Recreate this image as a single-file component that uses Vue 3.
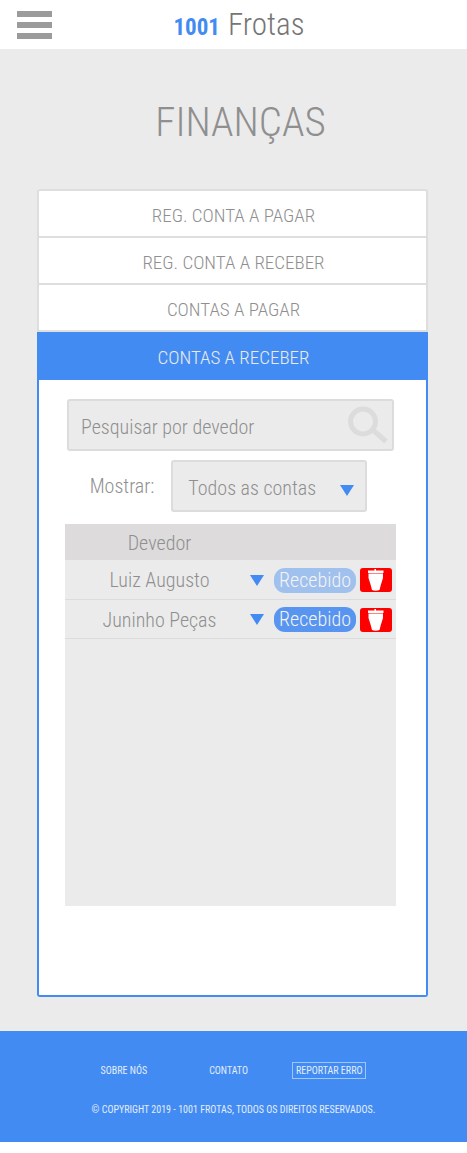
<script setup>
import { ref } from 'vue'

const tabs = ['REG. CONTA A PAGAR', 'REG. CONTA A RECEBER', 'CONTAS A PAGAR', 'CONTAS A RECEBER']
const active = ref('CONTAS A RECEBER')
const search = ref('')
const filter = ref('Todos as contas')
const debtors = ref([
  { name: 'Luiz Augusto', received: true },
  { name: 'Juninho Peças', received: false },
])

function remove(debtor) {
  debtors.value = debtors.value.filter((d) => d !== debtor)
}
</script>

<template>
  <div class="page">
    <header class="topbar">
      <button class="menu" type="button" aria-label="Menu">
        <span></span><span></span><span></span>
      </button>
      <a class="logo" href="#"><b>1001</b><span>Frotas</span></a>
    </header>

    <main>
      <h1>FINANÇAS</h1>

      <nav class="tabs">
        <button
          v-for="tab in tabs"
          :key="tab"
          type="button"
          :class="{ active: tab === active }"
          @click="active = tab"
        >{{ tab }}</button>
      </nav>

      <section class="panel">
        <div class="search">
          <input v-model="search" type="text" placeholder="Pesquisar por devedor" aria-label="Pesquisar por devedor" />
          <button type="button" aria-label="Pesquisar">
            <svg width="40" height="38" viewBox="0 0 40 38">
              <circle cx="15" cy="15.5" r="12.5" fill="none" stroke="#dcdcdc" stroke-width="5" />
              <path d="M25.5 24.5L38 35.5" stroke="#dcdcdc" stroke-width="5" />
            </svg>
          </button>
        </div>

        <div class="filter">
          <label for="filter">Mostrar:</label>
          <div class="select">
            <select id="filter" v-model="filter">
              <option>Todos as contas</option>
            </select>
            <svg width="14" height="11" viewBox="0 0 14 11"><path d="M0 0H14L7 11Z" fill="#428bf2" /></svg>
          </div>
        </div>

        <div class="list">
          <table>
            <colgroup>
              <col />
              <col class="col-toggle" />
              <col class="col-status" />
              <col class="col-delete" />
            </colgroup>
            <thead>
              <tr>
                <th scope="col">Devedor</th>
                <td colspan="3"></td>
              </tr>
            </thead>
            <tbody>
              <tr v-for="debtor in debtors" :key="debtor.name">
                <td>{{ debtor.name }}</td>
                <td class="toggle">
                  <button type="button" :aria-label="'Detalhes de ' + debtor.name">
                    <svg width="14" height="11" viewBox="0 0 14 11"><path d="M0 0H14L7 11Z" fill="#428bf2" /></svg>
                  </button>
                </td>
                <td class="status">
                  <button type="button" :class="{ done: debtor.received }" @click="debtor.received = true">Recebido</button>
                </td>
                <td class="delete">
                  <button type="button" :aria-label="'Excluir ' + debtor.name" @click="remove(debtor)">
                    <svg width="32" height="24" viewBox="0 0 32 24">
                      <rect width="32" height="24" rx="3" fill="#f00" />
                      <path d="M8 2.5H14.5V1H16V2.5H23.5V5H8Z" fill="#fff" />
                      <path d="M8.5 5.4H23V10L20.8 17L19.5 22Q15.5 23.5 12 22L10.700 17L8.5 10Z" fill="#fff" />
                    </svg>
                  </button>
                </td>
              </tr>
            </tbody>
          </table>
        </div>
      </section>
    </main>

    <footer>
      <nav>
        <a href="#">SOBRE NÓS</a>
        <a href="#">CONTATO</a>
        <a class="report" href="#">REPORTAR ERRO</a>
      </nav>
      <p>© COPYRIGHT 2019 - 1001 FROTAS, TODOS OS DIREITOS RESERVADOS.</p>
    </footer>
  </div>
</template>

<style>
body {
  margin: 0;
  background: #fff;
}
</style>

<style scoped>
.page {
  font-family: "Agency FB", "Roboto Condensed", "Roboto", "Liberation Sans", sans-serif;
  font-size: 20px;
  font-weight: 300;
  color: #8f8f8f;
}
.page * {
  box-sizing: border-box;
}
button,
input,
select {
  margin: 0;
  padding: 0;
  border: 0;
  background: none;
  font: inherit;
  color: inherit;
  cursor: pointer;
}
svg {
  display: block;
}
a {
  color: inherit;
  text-decoration: none;
}

.topbar {
  display: grid;
  grid-template-columns: 35px 1fr 24px;
  align-items: center;
  height: 49px;
  padding: 0 17px;
  background: #fff;
}
.menu {
  display: grid;
  gap: 5px;
  padding-bottom: 2px;
}
.menu span {
  height: 6px;
  background: #9b9b9b;
}
.logo {
  display: flex;
  justify-content: center;
  align-items: baseline;
  gap: 8px;
  font-size: 31px;
  line-height: 49px;
  color: #757575;
}
.logo b {
  font-size: 23px;
  font-weight: 700;
  color: #428bf2;
}

main {
  padding: 45px 39px 34px 37px;
  background: #ebebeb;
}
h1 {
  margin: 0 0 39px;
  padding-left: 16px;
  font-size: 41px;
  font-weight: 300;
  line-height: 56px;
  text-align: center;
}

.tabs {
  display: flex;
  flex-direction: column;
  border: 2px solid #dedede;
  border-bottom: 0;
  border-radius: 3px 3px 0 0;
  background: #fff;
}
.tabs button {
  height: 47px;
  padding: 4px 0 0 2px;
  border-bottom: 2px solid #dedede;
  font-size: 19px;
}
.tabs button.active {
  height: 48px;
  margin: 0 -2px;
  padding-top: 2px;
  border: 0;
  background: #428bf2;
  color: #ebebeb;
}

.panel {
  padding: 19px 30px 89px 26px;
  border: 2px solid #428bf2;
  border-top: 0;
  border-radius: 0 0 3px 3px;
  background: #fff;
}
.search,
.select {
  display: flex;
  align-items: center;
  height: 52px;
  border: 2px solid #dcdcdc;
  border-radius: 3px;
  background: #ebebeb;
}
.search {
  margin: 0 2px;
  padding: 0 4px 0 12px;
}
.search input {
  flex: 1;
  min-width: 0;
  height: 100%;
  padding-top: 4px;
  cursor: text;
}
.search input::placeholder {
  color: #8f8f8f;
  opacity: 1;
}
.filter {
  display: flex;
  align-items: center;
  justify-content: center;
  gap: 17px;
  margin: 9px 0 12px;
  padding-right: 4px;
}
.select {
  position: relative;
  width: 196px;
}
.select select {
  width: 100%;
  height: 100%;
  padding: 4px 32px 0 15px;
  appearance: none;
}
.select svg {
  position: absolute;
  top: 23px;
  right: 11px;
  pointer-events: none;
}

.list {
  min-height: 382px;
  background: #ebebeb;
}
table {
  width: 100%;
  border-collapse: collapse;
  table-layout: fixed;
}
.col-toggle {
  width: 34px;
}
.col-status {
  width: 86px;
}
.col-delete {
  width: 36px;
}
thead tr {
  height: 36px;
  background: #dddbdc;
}
th,
td {
  padding: 2px 0 0;
  font-weight: 300;
  text-align: center;
}
th,
tbody td:first-child {
  padding-left: 14px;
}
tbody tr {
  height: 39px;
  border-bottom: 1px solid #dcdcdc;
}
.toggle button {
  display: block;
  margin: 0 auto;
}
.status button {
  display: block;
  width: 82px;
  height: 25px;
  border-radius: 11px;
  background: #5795f0;
  line-height: 25px;
  color: #f4f4f4;
}
.status button.done {
  background: #a0c0ee;
}
.delete button {
  display: block;
}

footer {
  padding: 31px 20px 24px;
  background: #428bf2;
  font-size: 10px;
  font-weight: 400;
  color: #e3edfb;
  text-align: center;
}
footer nav {
  display: flex;
  justify-content: center;
  align-items: center;
  height: 17px;
}
footer nav a {
  margin-right: 62px;
}
footer nav .report {
  margin: 0 0 0 -18px;
  padding: 0 3px;
  border: 1px solid #a0c5f8;
  line-height: 15px;
}
footer p {
  margin: 23px 0 0;
  line-height: 16px;
}
</style>
